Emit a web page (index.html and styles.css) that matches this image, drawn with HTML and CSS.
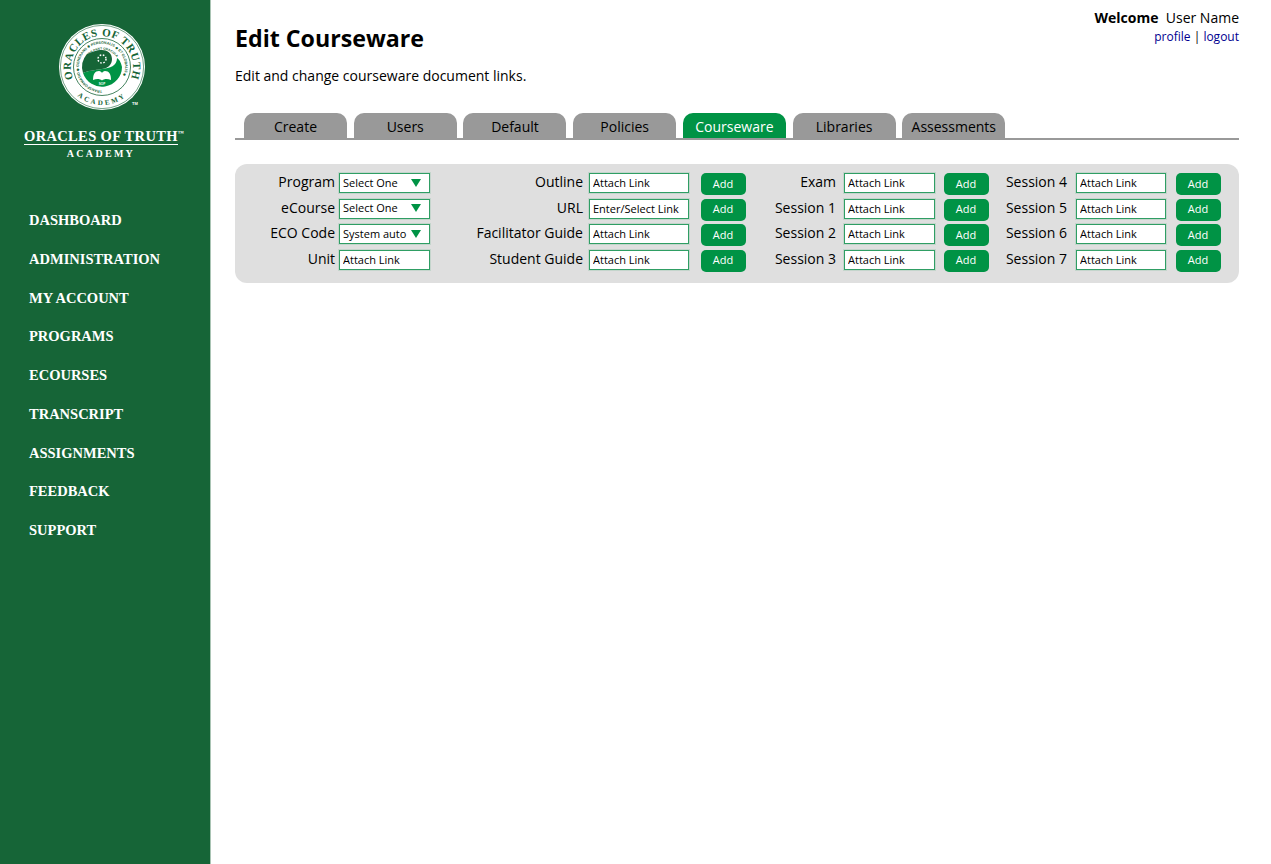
FILE: index.html
```html
<!DOCTYPE html>
<html>
  <head>
    <meta charset="utf-8">
    <title>Edit Courseware</title>
    <link rel="stylesheet" href="styles.css">
  </head>
  <body>
    <div class="sidebar">
      <div class="brand">
        <svg class="seal" width="100" height="96" viewBox="0 0 100 96">
          <defs>
            <path id="arcTop" d="M 21.6 62.8 A 31 31 0 1 1 72.4 62.8"/>
            <path id="arcBottom" d="M 9 45 A 38 38 0 0 0 85 45"/>
            <path id="arcRing" d="M 47 68.2 A 23.2 23.2 0 1 1 47.01 68.2"/>
            <path id="arcInner" d="M 33 34.5 A 17.5 17.5 0 0 1 61 34.5"/>
          </defs>
          <circle cx="47" cy="45" r="43" fill="#fff"/>
          <circle cx="47" cy="45" r="41.6" fill="none" stroke="#166537" stroke-width=".6"/>
          <text class="seal-big"><textPath href="#arcTop" startOffset="50%" text-anchor="middle">ORACLES OF TRUTH</textPath></text>
          <text class="seal-low"><textPath href="#arcBottom" startOffset="50%" text-anchor="middle">ACADEMY</textPath></text>
          <circle cx="47" cy="45" r="28.5" fill="none" stroke="#166537" stroke-width=".8"/>
          <text class="seal-tiny"><textPath href="#arcRing" startOffset="0">TRANSFORMATIO ◆ GENERANS ◆ PERSONALIS ◆ ET GLOBALIS ◆</textPath></text>
          <path d="M 28 51 A 20 20 0 0 0 67 45 C 66 40 64 37 62 36 C 62 44 55 46 47 47 C 40 48 32 49 28 51 Z" fill="#009345"/>
          <path d="M 32 32 A 20 20 0 0 0 28 51 C 32 49 40 48 47 47 C 54 46 57 42 57 37 C 57 31 52 28 47 28 C 41 28 38 30 32 32 Z" fill="#166537"/>
          <text class="seal-inner"><textPath href="#arcInner" startOffset="50%" text-anchor="middle">BIOS PANT ORACULA</textPath></text>
          <circle cx="47" cy="37" r="4" fill="none" stroke="#fff" stroke-width="1.5" stroke-dasharray="1.6 1.6"/>
          <path d="M 38 58 C 38 52 40 49 44 49 C 45.5 49 46.5 50 47 51 C 47.5 50 48.5 49 50 49 C 54 49 56 52 56 58 C 52 56.5 49 57 47 58.5 C 45 57 42 56.5 38 58 Z" fill="#fff"/>
          <text class="seal-sop" x="47" y="63" text-anchor="middle">SOP</text>
          <text class="seal-tm" x="77" y="83">TM</text>
        </svg>
        <div class="wordmark">ORACLES OF TRUTH<sup>™</sup></div>
        <div class="academy">ACADEMY</div>
      </div>
      <ul class="nav">
        <li><a href="#">DASHBOARD</a></li>
        <li><a href="#">ADMINISTRATION</a></li>
        <li><a href="#">MY ACCOUNT</a></li>
        <li><a href="#">PROGRAMS</a></li>
        <li><a href="#">ECOURSES</a></li>
        <li><a href="#">TRANSCRIPT</a></li>
        <li><a href="#">ASSIGNMENTS</a></li>
        <li><a href="#">FEEDBACK</a></li>
        <li><a href="#">SUPPORT</a></li>
      </ul>
    </div>

    <div class="main">
      <div class="topline">
        <h1>Edit Courseware</h1>
        <div class="user">
          <div><b>Welcome</b>&nbsp; User Name</div>
          <div class="user-links"><a href="#">profile</a> | <a href="#">logout</a></div>
        </div>
      </div>
      <p class="intro">Edit and change courseware document links.</p>

      <div class="tabs">
        <a class="tab" href="#">Create</a>
        <a class="tab" href="#">Users</a>
        <a class="tab" href="#">Default</a>
        <a class="tab" href="#">Policies</a>
        <a class="tab active" href="#">Courseware</a>
        <a class="tab" href="#">Libraries</a>
        <a class="tab" href="#">Assessments</a>
      </div>

      <div class="panel">
        <div class="col col-one">
          <label>Program</label><div class="pick">Select One<i></i></div>
          <label>eCourse</label><div class="pick">Select One<i></i></div>
          <label>ECO Code</label><div class="pick">System auto<i></i></div>
          <label>Unit</label><input type="text" value="Attach Link">
        </div>
        <div class="col col-two">
          <label>Outline</label><input type="text" value="Attach Link"><button>Add</button>
          <label>URL</label><input type="text" value="Enter/Select Link"><button>Add</button>
          <label>Facilitator Guide</label><input type="text" value="Attach Link"><button>Add</button>
          <label>Student Guide</label><input type="text" value="Attach Link"><button>Add</button>
        </div>
        <div class="col col-three">
          <label>Exam</label><input type="text" value="Attach Link"><button>Add</button>
          <label>Session 1</label><input type="text" value="Attach Link"><button>Add</button>
          <label>Session 2</label><input type="text" value="Attach Link"><button>Add</button>
          <label>Session 3</label><input type="text" value="Attach Link"><button>Add</button>
        </div>
        <div class="col col-four">
          <label>Session 4</label><input type="text" value="Attach Link"><button>Add</button>
          <label>Session 5</label><input type="text" value="Attach Link"><button>Add</button>
          <label>Session 6</label><input type="text" value="Attach Link"><button>Add</button>
          <label>Session 7</label><input type="text" value="Attach Link"><button>Add</button>
        </div>
      </div>
    </div>
  </body>
</html>
```
FILE: styles.css
```css
html, body {
  height: 100%;
}
body {
  margin: 0;
  display: flex;
  font-family: "Open Sans", Arial, sans-serif;
  font-size: 14px;
  color: #000;
  background-color: #fff;
  overflow: hidden;
}

/* sidebar */
.sidebar {
  flex: 0 0 210px;
  height: 864px;
  background-color: #166537;
  border-right: 1px solid #a9c4b4;
}
.brand {
  display: flex;
  flex-direction: column;
  align-items: center;
  padding-top: 22px;
  color: #fff;
  font-family: "Liberation Serif", serif;
}
.seal {
  display: block;
}
.seal-big {
  font: bold 11px "Liberation Serif", serif;
  letter-spacing: .55px;
  fill: #166537;
}
.seal-low {
  font: bold 7px "Liberation Serif", serif;
  letter-spacing: 2.4px;
  fill: #166537;
}
.seal-tiny {
  font: bold 3.6px "Liberation Sans", sans-serif;
  fill: #166537;
}
.seal-inner {
  font: bold 3.2px "Liberation Sans", sans-serif;
  fill: #166537;
}
.seal-sop {
  font: bold 3px "Liberation Sans", sans-serif;
  fill: #fff;
}
.seal-tm {
  font: bold 4px "Liberation Sans", sans-serif;
  fill: #fff;
}
.wordmark {
  width: 154px;
  margin: 11px 8px 0 0;
  border-bottom: 1px solid #fff;
  font-size: 14.5px;
  font-weight: bold;
  line-height: 15px;
  letter-spacing: .35px;
  white-space: nowrap;
}
.wordmark sup {
  font-size: 6px;
  line-height: 0;
  letter-spacing: 0;
  vertical-align: 6px;
}
.academy {
  margin: 3px 8px 0 0;
  font-size: 10px;
  font-weight: bold;
  line-height: 11px;
  letter-spacing: 2.3px;
}
.nav {
  list-style: none;
  margin: 42px 0 0;
  padding: 0 0 0 29px;
}
.nav li {
  height: 38.75px;
}
.nav a {
  color: #fff;
  font-family: "Liberation Serif", serif;
  font-size: 14.5px;
  font-weight: bold;
  line-height: 38px;
  text-decoration: none;
}

/* main area */
.main {
  flex: 1;
  min-width: 0;
  padding: 0 32px 0 24px;
}
.topline {
  display: flex;
  justify-content: space-between;
  align-items: flex-start;
}
h1 {
  margin: 22px 0 0;
  font-size: 23.2px;
  line-height: 33px;
  font-weight: 700;
}
.user {
  padding-top: 8px;
  text-align: right;
  line-height: 19px;
}
.user-links {
  font-size: 12px;
  line-height: 19px;
}
.user-links a {
  color: #000090;
  text-decoration: none;
}
.intro {
  margin: 11px 0 0;
  line-height: 19px;
}

/* tabs */
.tabs {
  display: flex;
  gap: 6.72px;
  margin-top: 28px;
  padding-left: 9px;
  border-bottom: 2px solid #999;
}
.tab {
  width: 103px;
  height: 25px;
  background-color: #999;
  border-radius: 10px 10px 0 0;
  color: #000;
  line-height: 28px;
  text-align: center;
  text-decoration: none;
}
.tab.active {
  background-color: #009345;
  color: #fff;
}

/* link form */
.panel {
  display: flex;
  height: 119px;
  margin-top: 24px;
  padding-top: 9px;
  box-sizing: border-box;
  background-color: #dfdfdf;
  border-radius: 12px;
}
.col {
  display: grid;
  grid-auto-rows: 25.5px;
  align-items: start;
}
.col-one { grid-template-columns: 100px 91px; column-gap: 4px; }
.col-two { grid-template-columns: 153px 100px 51px; column-gap: 6px; }
.col-three { grid-template-columns: 90px 91px 46px; column-gap: 8px; }
.col-four { grid-template-columns: 78px 90px 46px; column-gap: 9px; }
label {
  text-align: right;
  line-height: 17px;
  white-space: nowrap;
}
input, .pick {
  display: block;
  width: 100%;
  height: 20px;
  margin: 0;
  padding: 0 3px 1px;
  box-sizing: border-box;
  background-color: #fff;
  border: 1px solid #2f9e64;
  border-radius: 0;
  box-shadow: 0 0 0 1px rgba(47, 158, 100, .15);
  outline: none;
  color: #000;
  font-family: "Open Sans", Arial, sans-serif;
  font-size: 11px;
  line-height: 18px;
}
.pick {
  display: flex;
  justify-content: space-between;
  align-items: center;
  padding-right: 8px;
}
.pick i {
  width: 0;
  height: 0;
  border-left: 5px solid transparent;
  border-right: 5px solid transparent;
  border-top: 8px solid #009345;
}
button {
  justify-self: end;
  width: 45px;
  height: 22px;
  padding: 0 1px 2px 0;
  background-color: #009345;
  border: none;
  border-radius: 5px;
  color: #fff;
  font-family: "Open Sans", Arial, sans-serif;
  font-size: 11px;
  cursor: pointer;
}
```
